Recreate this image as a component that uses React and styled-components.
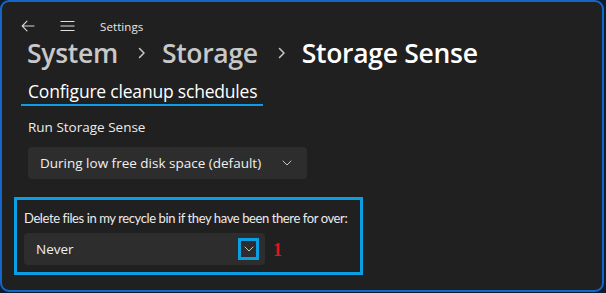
import React from 'react';
import styled, { createGlobalStyle } from 'styled-components';

const GlobalStyle = createGlobalStyle`
  html, body {
    margin: 0;
    padding: 0;
    background: #0d1b2e;
  }
  body {
    font-family: 'Open Sans', 'Noto Sans', sans-serif;
  }
`;

const Window = styled.div`
  box-sizing: border-box;
  width: 604px;
  height: 292px;
  background: #202020;
  border: 2px solid #1566c9;
  border-radius: 9px;
  padding: 14px 0 0 18px;
  display: flex;
  flex-direction: column;
  overflow: hidden;
`;

const TitleBar = styled.div`
  display: flex;
  align-items: center;
  height: 20px;
  color: #e6e6e6;
`;

const IconButton = styled.span`
  display: inline-flex;
  width: 16px;
  justify-content: center;
  margin-right: ${(p) => p.$gap}px;
`;

const AppTitle = styled.span`
  font-size: 11.5px;
  color: #e8e8e8;
  letter-spacing: 0.1px;
`;

const Breadcrumb = styled.h1`
  margin: 0 0 0 7px;
  display: flex;
  align-items: center;
  font-size: 26.5px;
  font-weight: 600;
  line-height: 34px;
  letter-spacing: -0.3px;
`;

const Crumb = styled.span`
  color: ${(p) => (p.$current ? '#ffffff' : '#c8c8c8')};
`;

const Sep = styled.span`
  display: inline-flex;
  margin: 0 16px 0 20px;
  color: #c8c8c8;
`;

const Section = styled.div`
  margin: 9px 0 0 1px;
  display: inline-flex;
  flex-direction: column;
  align-self: flex-start;
`;

const SectionTitle = styled.h2`
  margin: 0;
  padding: 0 6px 1px 7px;
  font-size: 17.5px;
  font-weight: 400;
  letter-spacing: -0.2px;
  color: #ffffff;
  line-height: 24px;
  border-bottom: 2px solid #0e9ce6;
`;

const Label = styled.div`
  font-size: 13.5px;
  color: #ececec;
  line-height: 18px;
  white-space: nowrap;
`;

const LongLabel = styled(Label)`
  font-family: Lato, 'Open Sans', sans-serif;
  font-size: 13px;
  letter-spacing: -0.4px;
`;

const Field = styled.div`
  margin: 12px 0 0 8px;
  display: flex;
  flex-direction: column;
  gap: 11px;
`;

const Select = styled.div`
  box-sizing: border-box;
  width: ${(p) => p.$width}px;
  height: 32px;
  background: #2d2d2d;
  border-radius: 4px;
  display: flex;
  align-items: center;
  justify-content: space-between;
  padding: 0 ${(p) => p.$padRight}px 0 12px;
  font-size: 13.5px;
  color: #f0f0f0;
`;

const Highlight = styled.div`
  box-sizing: border-box;
  margin: 18px 0 0 -6px;
  width: 349px;
  height: 78px;
  border: 3px solid #0a9fe3;
  padding: 9px 0 0 7px;
  display: flex;
  flex-direction: column;
  gap: 6px;
`;

const Row = styled.div`
  display: flex;
  align-items: center;
`;

const ChevronBox = styled.span`
  box-sizing: border-box;
  width: 21px;
  height: 22px;
  border: 3px solid #0a9fe3;
  display: inline-flex;
  align-items: center;
  justify-content: center;
`;

const Marker = styled.span`
  margin-left: 8px;
  margin-top: 1px;
  font-family: 'Liberation Serif', serif;
  font-weight: 700;
  font-size: 18px;
  line-height: 18px;
  color: #e0161c;
`;

const Chevron = ({ color = '#c8c8c8' }) => (
  <svg width="10" height="6" viewBox="0 0 10 6" fill="none">
    <path d="M1 1l4 4 4-4" stroke={color} strokeWidth="1" strokeLinecap="round" strokeLinejoin="round" />
  </svg>
);

const CrumbSep = () => (
  <Sep>
    <svg width="8" height="12" viewBox="0 0 8 12" fill="none">
      <path d="M1.5 1.5L6 6l-4.5 4.5" stroke="#c8c8c8" strokeWidth="1.5" strokeLinecap="round" strokeLinejoin="round" />
    </svg>
  </Sep>
);

const App = () => (
  <>
    <GlobalStyle />
    <Window>
      <TitleBar>
        <IconButton $gap={23}>
          <svg width="14" height="12" viewBox="0 0 14 12" fill="none">
            <path d="M13 6H1.5M6 1.2L1.2 6 6 10.8" stroke="#d6d6d6" strokeWidth="1.1" strokeLinecap="round" strokeLinejoin="round" />
          </svg>
        </IconButton>
        <IconButton $gap={25}>
          <svg width="15" height="12" viewBox="0 0 15 12" fill="none">
            <path d="M0.5 1.5h14M0.5 6h14M0.5 10.5h14" stroke="#e0e0e0" strokeWidth="1.1" />
          </svg>
        </IconButton>
        <AppTitle>Settings</AppTitle>
      </TitleBar>
      <Breadcrumb>
        <Crumb>System</Crumb>
        <CrumbSep />
        <Crumb>Storage</Crumb>
        <CrumbSep />
        <Crumb $current>Storage Sense</Crumb>
      </Breadcrumb>
      <Section>
        <SectionTitle>Configure cleanup schedules</SectionTitle>
      </Section>
      <Field>
        <Label>Run Storage Sense</Label>
        <Select $width={279} $padRight={15}>
          <span>During low free disk space (default)</span>
          <Chevron />
        </Select>
      </Field>
      <Highlight>
        <LongLabel>Delete files in my recycle bin if they have been there for over:</LongLabel>
        <Row>
          <Select $width={241} $padRight={6}>
            <span>Never</span>
            <ChevronBox>
              <Chevron />
            </ChevronBox>
          </Select>
          <Marker>1</Marker>
        </Row>
      </Highlight>
    </Window>
  </>
);

export default App;
